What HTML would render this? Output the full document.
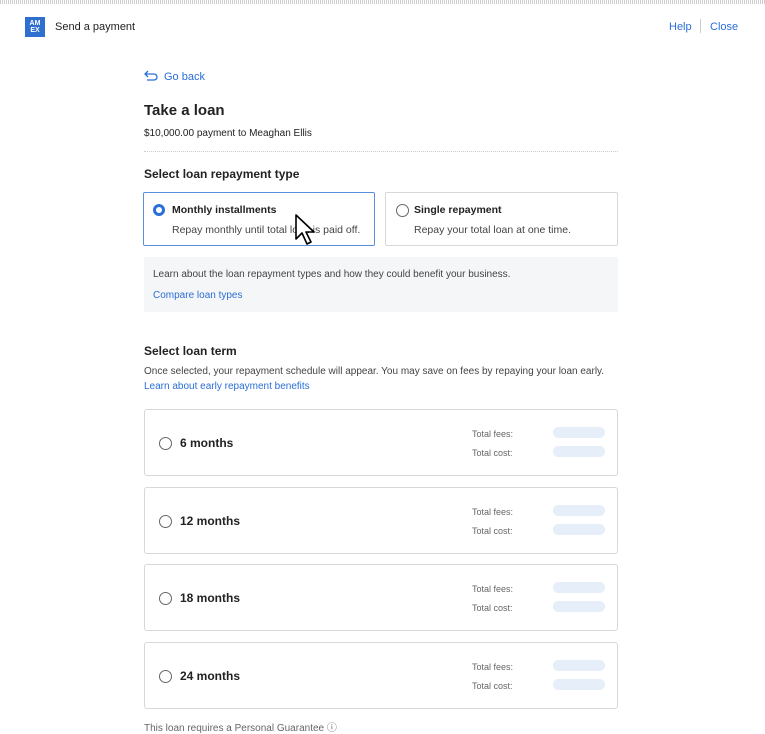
<!DOCTYPE html><html><head><style>
body{margin:0;width:765px;height:725px;overflow:hidden;background:#fff;font-family:"Liberation Sans",sans-serif;color:#222;position:relative}
.a{position:absolute}
.b{color:#2a6ed8}
.card{position:absolute;left:144px;width:474px;height:67px;border:1px solid #d8d8d8;border-radius:3px;box-sizing:border-box}
.rad{position:absolute;width:11px;height:11px;border:1px solid #666;border-radius:50%}
.pill{position:absolute;left:408px;width:52px;height:11px;background:#e5eef9;border-radius:6px}
.lab{position:absolute;left:327px;font-size:9px;color:#666}
</style></head><body>
<div class="a" style="left:0;top:0;width:765px;height:4px;background:repeating-linear-gradient(90deg,#ccc 0 1px,#fff 1px 2px)"></div>
<div class="a" style="left:25px;top:17px;width:20px;height:20px;background:#2e6fd0;color:#fff;font-size:7px;line-height:7px;text-align:center;font-weight:bold;padding-top:3px;box-sizing:border-box">AM<br>EX</div>
<div class="a" style="left:55px;top:21px;font-size:11px">Send a payment</div>
<div class="a b" style="left:669px;top:21px;font-size:11px">Help</div>
<div class="a" style="left:700px;top:19px;width:1px;height:14px;background:#ccc"></div>
<div class="a b" style="left:710px;top:21px;font-size:11px">Close</div>
<svg class="a" style="left:144px;top:70px" width="14" height="12" viewBox="0 0 14 12"><path d="M4 1 L1 4 L4 7 M1 4 H10 A3 3 0 0 1 10 10 H3" fill="none" stroke="#2a6ed8" stroke-width="1.3"/></svg>
<div class="a b" style="left:164px;top:71px;font-size:11px">Go back</div>
<div class="a" style="left:144px;top:102px;font-size:15px;font-weight:bold">Take a loan</div>
<div class="a" style="left:144px;top:128px;font-size:10px">$10,000.00 payment to Meaghan Ellis</div>
<div class="a" style="left:144px;top:151px;width:474px;border-top:1px dotted #ccc"></div>
<div class="a" style="left:144px;top:167px;font-size:12px;font-weight:bold">Select loan repayment type</div>
<div class="a" style="left:143px;top:192px;width:232px;height:54px;border:1.5px solid #5a8fdc;border-radius:2px;box-sizing:border-box"></div>
<div class="a" style="left:153px;top:204px;width:6px;height:6px;border:3px solid #2a6ed8;border-radius:50%"></div>
<div class="a" style="left:172px;top:204px;font-size:10.5px;font-weight:bold">Monthly installments</div>
<div class="a" style="left:172px;top:224px;font-size:10.5px;color:#444">Repay monthly until total loan is paid off.</div>
<div class="a" style="left:385px;top:192px;width:233px;height:54px;border:1px solid #d8d8d8;border-radius:2px;box-sizing:border-box"></div>
<div class="rad" style="left:396px;top:204px"></div>
<div class="a" style="left:414px;top:204px;font-size:10.5px;font-weight:bold">Single repayment</div>
<div class="a" style="left:414px;top:224px;font-size:10.5px;color:#444">Repay your total loan at one time.</div>
<div class="a" style="left:144px;top:257px;width:474px;height:55px;background:#f5f6f7"></div>
<div class="a" style="left:153px;top:269px;font-size:10px;color:#444">Learn about the loan repayment types and how they could benefit your business.</div>
<div class="a b" style="left:153px;top:290px;font-size:10px">Compare loan types</div>
<div class="a" style="left:144px;top:344px;font-size:12px;font-weight:bold">Select loan term</div>
<div class="a" style="left:144px;top:366px;font-size:10px;color:#444">Once selected, your repayment schedule will appear. You may save on fees by repaying your loan early.</div>
<div class="a b" style="left:144px;top:381px;font-size:10px">Learn about early repayment benefits</div>
<div class="card" style="top:409px"><div class="rad" style="left:14px;top:27px"></div><div class="a" style="left:35px;top:26px;font-size:12px;font-weight:bold">6 months</div><div class="lab" style="top:19px">Total fees:</div><div class="lab" style="top:38px">Total cost:</div><div class="pill" style="top:17px"></div><div class="pill" style="top:36px"></div></div>
<div class="card" style="top:487px"><div class="rad" style="left:14px;top:27px"></div><div class="a" style="left:35px;top:26px;font-size:12px;font-weight:bold">12 months</div><div class="lab" style="top:19px">Total fees:</div><div class="lab" style="top:38px">Total cost:</div><div class="pill" style="top:17px"></div><div class="pill" style="top:36px"></div></div>
<div class="card" style="top:564px"><div class="rad" style="left:14px;top:27px"></div><div class="a" style="left:35px;top:26px;font-size:12px;font-weight:bold">18 months</div><div class="lab" style="top:19px">Total fees:</div><div class="lab" style="top:38px">Total cost:</div><div class="pill" style="top:17px"></div><div class="pill" style="top:36px"></div></div>
<div class="card" style="top:642px"><div class="rad" style="left:14px;top:27px"></div><div class="a" style="left:35px;top:26px;font-size:12px;font-weight:bold">24 months</div><div class="lab" style="top:19px">Total fees:</div><div class="lab" style="top:38px">Total cost:</div><div class="pill" style="top:17px"></div><div class="pill" style="top:36px"></div></div>
<div class="a" style="left:144px;top:719px;font-size:10px;color:#666">This loan requires a Personal Guarantee ⓘ</div>
<svg class="a" style="left:294px;top:213px" width="24" height="34" viewBox="0 0 24 34"><path d="M2 2 L2 26 L8 20 L13 31 L17 29 L12 19 L20 19 Z" fill="#fff" stroke="#000" stroke-width="1.6" stroke-linejoin="round"/></svg>
</body></html>
